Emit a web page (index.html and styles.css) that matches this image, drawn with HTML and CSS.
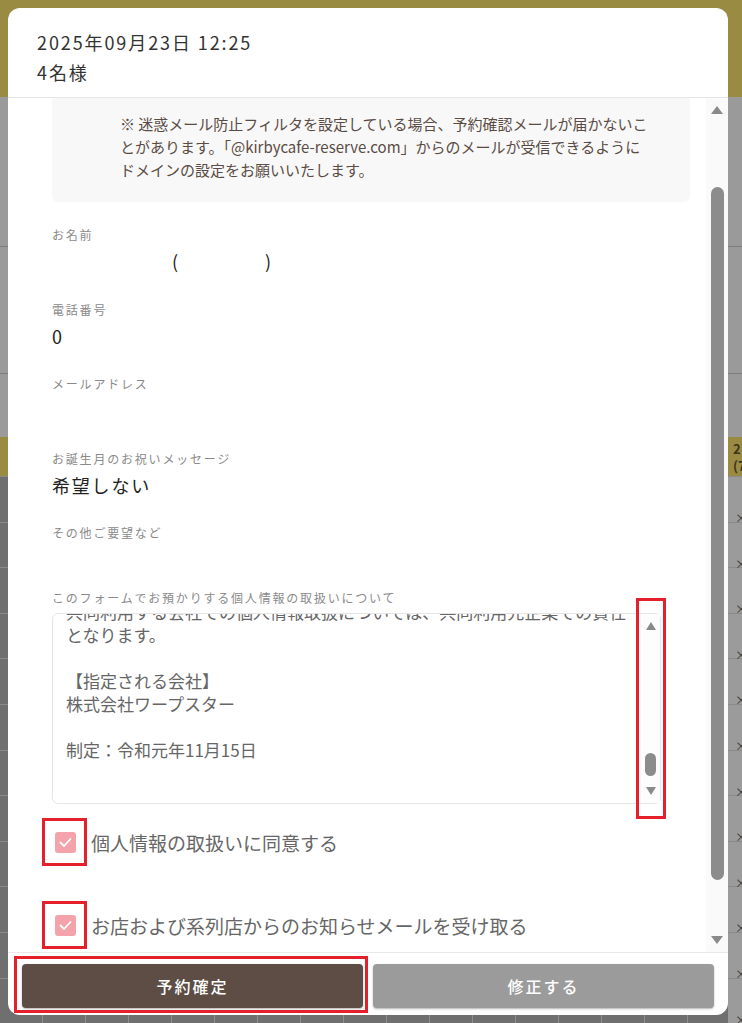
FILE: index.html
```html
<!DOCTYPE html>
<html lang="ja">
<head>
    <meta charset="UTF-8">
    <meta name="viewport" content="width=device-width, initial-scale=1.0">
    <title>予約内容の確認</title>
    <link rel="stylesheet" href="styles.css">
</head>
<body>
    <div class="screen">
        <div class="modal">
            <header class="modal-head">
                <p>2025年09月23日 12:25</p>
                <p>4名様</p>
            </header>

            <div class="modal-body">
                <div class="content">
                    <div class="notice">
                        ※ 迷惑メール防止フィルタを設定している場合、予約確認メールが届かないこ<br>とがあります。「@kirbycafe-reserve.com」からのメールが受信できるように<br>ドメインの設定をお願いいたします。
                    </div>

                    <div class="field">
                        <p class="label">お名前</p>
                        <p class="value"><span class="n-last"></span><span class="n-first"></span>(<span class="n-kana"></span>)</p>
                    </div>
                    <div class="field">
                        <p class="label">電話番号</p>
                        <p class="value">0</p>
                    </div>
                    <div class="field">
                        <p class="label">メールアドレス</p>
                        <p class="value"></p>
                    </div>
                    <div class="field">
                        <p class="label">お誕生月のお祝いメッセージ</p>
                        <p class="value wide">希望しない</p>
                    </div>
                    <div class="field field-last">
                        <p class="label">その他ご要望など</p>
                        <p class="value"></p>
                    </div>

                    <div class="policy">
                        <p class="label">このフォームでお預かりする個人情報の取扱いについて</p>
                        <div class="policy-box">
                            <div class="policy-text">
                                <p>共同利用する会社での個人情報取扱については、共同利用先企業での責任となります。</p>
                                <p>【指定される会社】<br>株式会社ワープスター</p>
                                <p>制定：令和元年11月15日</p>
                            </div>
                            <div class="mini-scroll hl hl-scroll">
                                <span class="arr up"></span>
                                <span class="thumb"></span>
                                <span class="arr down"></span>
                            </div>
                        </div>
                    </div>

                    <label class="check-row">
                        <span class="check hl hl-check">
                            <svg width="21" height="21" viewBox="0 0 21 21"><polyline points="5.5,10.5 9,14 15.5,7" fill="none" stroke="#fff" stroke-width="1.8" stroke-linecap="round" stroke-linejoin="round"/></svg>
                        </span>
                        個人情報の取扱いに同意する
                    </label>
                    <label class="check-row">
                        <span class="check hl hl-check">
                            <svg width="21" height="21" viewBox="0 0 21 21"><polyline points="5.5,10.5 9,14 15.5,7" fill="none" stroke="#fff" stroke-width="1.8" stroke-linecap="round" stroke-linejoin="round"/></svg>
                        </span>
                        お店および系列店からのお知らせメールを受け取る
                    </label>
                </div>

                <div class="vscroll">
                    <span class="arr up"></span>
                    <span class="thumb"></span>
                    <span class="arr down"></span>
                </div>
            </div>

            <footer class="modal-foot">
                <button class="btn btn-confirm hl hl-btn">予約確定</button>
                <button class="btn btn-back">修正する</button>
            </footer>
        </div>

        <div class="rail">
            <div class="rail-head">2<br>(7</div>
            <div class="rail-cell">×</div>
            <div class="rail-cell">×</div>
            <div class="rail-cell">×</div>
            <div class="rail-cell">×</div>
            <div class="rail-cell">×</div>
            <div class="rail-cell">×</div>
            <div class="rail-cell">×</div>
            <div class="rail-cell">×</div>
            <div class="rail-cell">×</div>
            <div class="rail-cell">×</div>
            <div class="rail-cell">×</div>
            <div class="rail-cell">×</div>
        </div>
    </div>
</body>
</html>
```

FILE: styles.css
```css
body {
    margin: 0;
    font-family: "Noto Sans CJK JP", "Noto Sans", sans-serif;
    color: #333;
}
p {
    margin: 0;
}
.screen {
    width: 742px;
    height: 1023px;
    display: flex;
    overflow: hidden;
    background:
        linear-gradient(#7d7d7d, #7d7d7d) 0 246px / 100% 1px no-repeat,
        linear-gradient(#7d7d7d, #7d7d7d) 0 373px / 100% 1px no-repeat,
        repeating-linear-gradient(to bottom, #8a8a8a 0 1px, transparent 1px 45.6px) 0 476px / 100% 540px no-repeat,
        repeating-linear-gradient(to right, transparent 0 42px, #8f8f8f 42px 43px) 0 1015px / 100% 8px no-repeat,
        linear-gradient(to bottom, #9a8b42 0 97px, #9a9a9a 97px 437px, #9a8b42 437px 476px, #6f6f6f 476px);
}

/* modal */
.modal {
    flex: none;
    width: 720px;
    height: 1007px;
    margin: 8px 0 8px 8px;
    background: #fff;
    border-radius: 12px;
    display: flex;
    flex-direction: column;
    overflow: hidden;
}
.modal-head {
    flex: none;
    height: 90px;
    box-sizing: border-box;
    padding: 19px 29px 0;
    border-bottom: 1px solid #e6e6e6;
    font-size: 18px;
    line-height: 30px;
    letter-spacing: 1.9px;
    color: #333;
}
.modal-body {
    flex: 1;
    min-height: 0;
    display: flex;
}
.content {
    flex: 1;
    overflow: hidden;
    padding: 0 16px 0 44px;
}

/* scrollbars */
.vscroll {
    flex: none;
    width: 22px;
    background: #fafafa;
    display: flex;
    flex-direction: column;
    align-items: center;
}
.arr {
    width: 0;
    height: 0;
    border-left: 6px solid transparent;
    border-right: 6px solid transparent;
}
.arr.up {
    border-bottom: 8px solid #8a8a8a;
}
.arr.down {
    border-top: 8px solid #8a8a8a;
}
.vscroll .up {
    margin-top: 8px;
}
.vscroll .thumb {
    width: 13px;
    height: 693px;
    margin-top: 73px;
    background: #8c8c8c;
    border-radius: 7px;
}
.vscroll .down {
    margin-top: auto;
    margin-bottom: 8px;
}

/* notice */
.notice {
    padding: 14px 18px 21px 68px;
    background: #f8f8f8;
    border-radius: 0 0 6px 6px;
    font-size: 15px;
    line-height: 23px;
    color: #5a4c45;
    white-space: nowrap;
}

/* fields */
.field {
    margin-bottom: 26.5px;
}
.notice + .field {
    margin-top: 24px;
}
.field-last {
    margin-bottom: 17px;
}
.label {
    font-size: 12px;
    line-height: 18px;
    letter-spacing: 1.8px;
    color: #8a8a8a;
}
.value {
    margin-top: 4px;
    min-height: 26px;
    font-size: 18px;
    line-height: 26px;
    color: #222;
}
.value.wide {
    letter-spacing: 1.8px;
}
.n-last,
.n-first {
    display: inline-block;
    width: 60px;
}
.n-kana {
    display: inline-block;
    width: 87px;
}

/* policy */
.policy .label {
    margin-bottom: 6px;
}
.policy-box {
    width: 609px;
    height: 191px;
    box-sizing: border-box;
    border: 1px solid #e6e6e6;
    border-radius: 6px;
    display: flex;
}
.policy-text {
    flex: 1;
    overflow: hidden;
    padding-left: 13px;
    font-size: 17px;
    line-height: 23px;
    color: #666;
}
.policy-text p {
    margin-bottom: 23px;
}
.policy-text p:first-child {
    margin-top: -14px;
}
.mini-scroll {
    flex: none;
    width: 19px;
    display: flex;
    flex-direction: column;
    align-items: center;
    background: #fdfdfd;
}
.mini-scroll .arr {
    border-left-width: 5.5px;
    border-right-width: 5.5px;
}
.mini-scroll .up {
    margin-top: 8px;
}
.mini-scroll .thumb {
    width: 11px;
    height: 23px;
    margin-top: 123px;
    background: #8c8c8c;
    border-radius: 6px;
}
.mini-scroll .down {
    margin-top: auto;
    margin-bottom: 8px;
}

/* checkboxes */
.check-row {
    display: flex;
    align-items: center;
    height: 30px;
    margin: 23px 0 53px;
    font-size: 19px;
    color: #666;
}
.check-row + .check-row {
    margin-top: 0;
}
.check {
    flex: none;
    width: 21px;
    height: 21px;
    margin: 0 15px 0 3px;
    background: #f4a3aa;
    border-radius: 3px;
}
.check svg {
    display: block;
}

/* annotation boxes */
.hl {
    position: relative;
}
.hl::after {
    content: "";
    position: absolute;
    border: 3px solid #e3202b;
    pointer-events: none;
}
.hl-check::after {
    inset: -14px -11px -13px -13px;
}
.hl-scroll::after {
    inset: -16px -6px -16px -5px;
}
.hl-btn::after {
    inset: -8px -5px -5px -8px;
}

/* footer */
.modal-foot {
    flex: none;
    display: grid;
    grid-template-columns: 1fr 1fr;
    gap: 10px;
    padding: 11px 14px 7px;
    border-top: 1px solid #e8e8e8;
}
.btn {
    height: 44px;
    border: none;
    border-radius: 4px;
    font-family: inherit;
    font-size: 16px;
    font-weight: 500;
    letter-spacing: 2px;
    color: #fff;
    box-shadow: 0 1px 2px rgba(0, 0, 0, 0.3);
}
.btn-confirm {
    background: #5d4d45;
}
.btn-back {
    background: #9b9b9b;
}

/* calendar behind the overlay */
.rail {
    flex: 1;
    margin-top: 437px;
    font-size: 12px;
    color: #3b3b3b;
}
.rail-head {
    height: 39px;
    box-sizing: border-box;
    padding: 3px 0 0 5px;
    background: #9a8b42;
    font-size: 13px;
    font-weight: bold;
    line-height: 17px;
    color: #3a3520;
}
.rail-cell {
    height: 45.6px;
    box-sizing: border-box;
    padding: 33px 0 0 7px;
    line-height: 16px;
    background: #9b9b9b;
    border-top: 1px solid #8a8a8a;
}
```
